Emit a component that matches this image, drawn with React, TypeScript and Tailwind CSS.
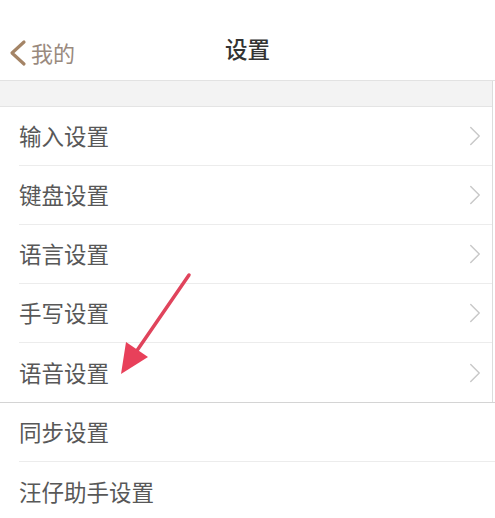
import { ChevronRight } from "lucide-react"

const groups = ["输入设置", "键盘设置", "语言设置", "手写设置", "语音设置"]
const rest = ["同步设置", "汪仔助手设置"]

function Row({ label, arrow, last }: { label: string; arrow: boolean; last?: boolean }) {
  return (
    <div className="flex h-[59px] items-center pl-[19px]">
      <div className={`flex h-full flex-1 items-center ${last ? "" : "border-b border-[#ececec]"}`}>
        <span className="flex-1 text-[22.5px] text-[#585858]">{label}</span>
        {arrow && <ChevronRight className="h-[34px] w-[34px] text-[#c8c8c8]" strokeWidth={1} />}
      </div>
    </div>
  )
}

export default function App() {
  return (
    <div
      className="relative h-[518px] w-[495px] overflow-hidden bg-white"
      style={{ fontFamily: '"Noto Sans CJK SC", "Noto Sans", sans-serif' }}
    >
      <header className="relative flex h-[81px] items-center justify-center border-b border-[#e2e2e2] pt-[18px]">
        <div className="absolute left-[7px] top-[36px] flex items-center">
          <svg width="22" height="30" viewBox="0 0 22 30" fill="none">
            <path d="M17 4 L5 15 L17 26" stroke="#a48466" strokeWidth="3.2" strokeLinecap="round" strokeLinejoin="round" />
          </svg>
          <span className="ml-[2px] text-[22px] text-[#9a8a7e]">我的</span>
        </div>
        <h1 className="text-[22.5px] font-medium text-[#333]">设置</h1>
      </header>

      <div className="mr-[2px] border-r border-[#dcdcdc]">
        <div className="h-[26px] border-b border-[#e4e4e4] bg-[#f3f3f3]" />
        {groups.map((g, i) => (
          <Row key={g} label={g} arrow last={i === groups.length - 1} />
        ))}
      </div>
      <div className="border-t border-[#d4d4d4]">
        {rest.map((g, i) => (
          <Row key={g} label={g} arrow={false} last={i === rest.length - 1} />
        ))}
      </div>

      {/* red annotation arrow */}
      <svg className="absolute left-0 top-0" width="495" height="518" viewBox="0 0 495 518">
        <line x1="189" y1="275" x2="136" y2="352" stroke="#e0445c" strokeWidth="3.5" strokeLinecap="round" />
        <polygon points="121,374 126,342 148,357" fill="#e8405a" />
      </svg>
    </div>
  )
}
